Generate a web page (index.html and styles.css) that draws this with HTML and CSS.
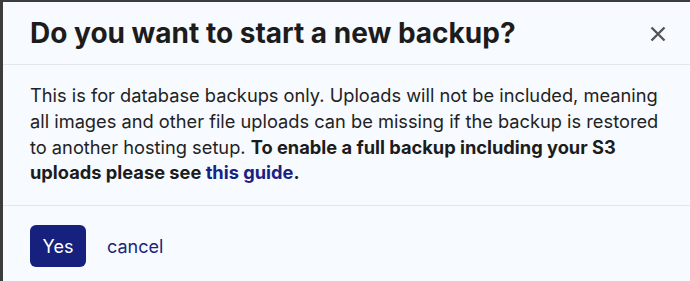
FILE: index.html
```html
<!DOCTYPE html>
<html>
<head>
<meta charset="utf-8">
<link rel="stylesheet" href="styles.css">
</head>
<body>
<div class="modal">
  <div class="modal-header">
    <h1 class="title">Do you want to start a new backup?</h1>
    <button class="close" aria-label="close">
      <svg width="16" height="16" viewBox="0 0 16 16"><path d="M1.5 1.5L14.5 14.5M14.5 1.5L1.5 14.5" stroke="#555" stroke-width="2.4" stroke-linecap="butt"/></svg>
    </button>
  </div>
  <div class="modal-body">
    <p>This is for database backups only. Uploads will not be included, meaning all images and other file uploads can be missing if the backup is restored to another hosting setup. <strong>To enable a full backup including your S3 uploads please see <a href="#">this guide</a>.</strong></p>
  </div>
  <div class="modal-footer">
    <button class="btn-primary">Yes</button>
    <a class="btn-link" href="#">cancel</a>
  </div>
</div>
</body>
</html>
```
FILE: styles.css
```css
* { box-sizing: border-box; }
html, body { margin: 0; padding: 0; height: 100%; }
body {
  background: #3c3c3c;
  font-family: Inter, "Noto Sans", sans-serif;
  overflow: hidden;
}
.modal {
  margin: 2px 0 0 3px;
  height: calc(100% - 2px);
  background: #f7fafe;
  display: flex;
  flex-direction: column;
}
.modal-header {
  height: 63px;
  flex: none;
  display: flex;
  align-items: center;
  justify-content: space-between;
  padding: 0 23px 0 27px;
  border-bottom: 1px solid #e2e7ec;
}
.title {
  margin: 0;
  font-size: 28px;
  line-height: 34px;
  font-weight: 700;
  color: #1c1c1c;
}
.close {
  background: none;
  border: 0;
  padding: 0;
  width: 18px;
  height: 18px;
  display: flex;
  align-items: center;
  justify-content: center;
  margin-top: 1px;
}
.modal-body {
  height: 141px;
  flex: none;
  padding: 18px 20px 0 27px;
  border-bottom: 1px solid #e2e7ec;
}
.modal-body p {
  margin: 0;
  font-size: 18.25px;
  line-height: 25.8px;
  color: #222;
}
.modal-body strong { font-weight: 700; color: #1c1c1c; }
.modal-body a { color: #172383; text-decoration: none; }
.modal-footer {
  display: flex;
  align-items: center;
  gap: 21px;
  padding: 19px 27px;
}
.btn-primary {
  background: #15217c;
  color: #fff;
  border: 0;
  border-radius: 6px;
  font-family: inherit;
  font-size: 18px;
  width: 56px;
  height: 42px;
  padding: 0;
}
.btn-link {
  color: #1b2580;
  text-decoration: none;
  font-size: 18px;
}
```
